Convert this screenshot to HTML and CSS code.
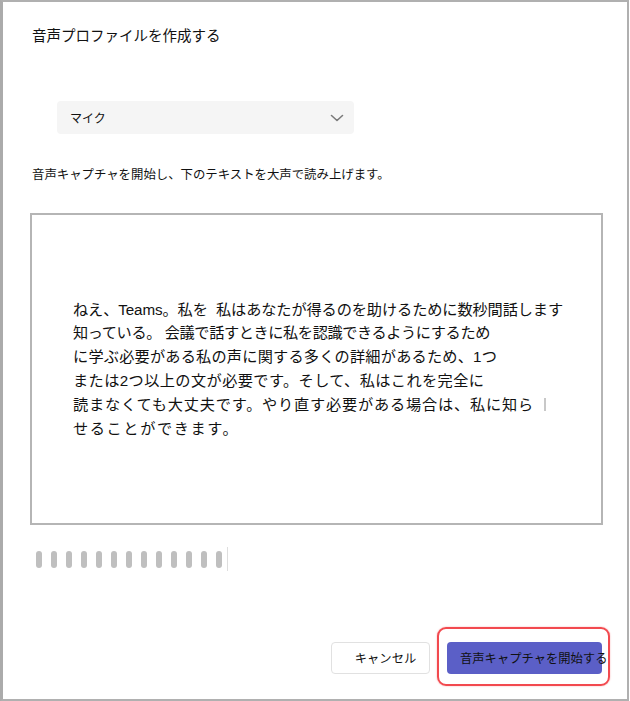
FILE: index.html
```html
<!DOCTYPE html>
<html lang="ja">
<head>
<meta charset="utf-8">
<link rel="stylesheet" href="styles.css">
</head>
<body>
<div class="frame">
  <h1 class="title">音声プロファイルを作成する</h1>
  <div class="select">
    <span class="select-label">マイク</span>
    <svg class="chevron" width="14" height="8" viewBox="0 0 14 8"><path d="M1.5 1.5 L7 6.5 L12.5 1.5" fill="none" stroke="#7a7a7a" stroke-width="1.6" stroke-linecap="round" stroke-linejoin="round"/></svg>
  </div>
  <p class="instruction">音声キャプチャを開始し、下のテキストを大声で読み上げます。</p>
  <div class="readbox">
    <p class="readtext">
      <span class="line l1">ねえ、Teams。私を&nbsp; 私はあなたが得るのを助けるために数秒間話します</span>
      <span class="line l2">知っている。 会議で話すときに私を認識できるようにするため</span>
      <span class="line l3">に学ぶ必要がある私の声に関する多くの詳細があるため、1つ</span>
      <span class="line l4">または2つ以上の文が必要です。そして、私はこれを完全に</span>
      <span class="line l5">読まなくても大丈夫です。やり直す必要がある場合は、私に知ら<span class="caret"></span></span>
      <span class="line l6">せることができます。</span>
    </p>
  </div>
  <div class="meter">
    <span class="bar"></span><span class="bar"></span><span class="bar"></span><span class="bar"></span><span class="bar"></span><span class="bar"></span><span class="bar"></span><span class="bar"></span><span class="bar"></span><span class="bar"></span><span class="bar"></span><span class="bar"></span><span class="bar"></span>
    <span class="meter-line"></span>
  </div>
  <div class="footer">
    <button class="btn btn-cancel">キャンセル</button>
    <div class="highlight">
      <button class="btn btn-primary">音声キャプチャを開始する</button>
    </div>
  </div>
</div>
</body>
</html>
```

FILE: styles.css
```css
html, body {
  margin: 0;
  padding: 0;
  background: #ffffff;
}
body {
  font-family: "Liberation Sans", "Noto Sans CJK JP", sans-serif;
  color: #111111;
}
.frame {
  box-sizing: border-box;
  width: 629px;
  height: 701px;
  border-left: 3px solid #ababab;
  border-top: 2px solid #b0b0b0;
  border-right: 2px solid #b0b0b0;
  border-bottom: 2px solid #b0b0b0;
  padding: 24px 0 0 27px;
  display: flex;
  flex-direction: column;
  align-items: flex-start;
}
.title {
  margin: 0 0 0 2px;
  font-size: 14.5px;
  line-height: 21px;
  font-weight: 400;
  color: #111;
}
.select {
  box-sizing: border-box;
  margin: 54px 0 0 27px;
  width: 297px;
  height: 33px;
  background: #f5f5f5;
  border-radius: 4px;
  display: flex;
  align-items: center;
  justify-content: space-between;
  padding: 0 10px 0 13px;
}
.select-label {
  font-size: 12px;
  color: #111;
}
.chevron {
  display: block;
}
.instruction {
  margin: 32px 0 0 2px;
  font-size: 12.4px;
  line-height: 18px;
  color: #111;
}
.readbox {
  box-sizing: border-box;
  margin-top: 29px;
  width: 573px;
  height: 312px;
  border: 2px solid #b5b5b5;
  display: flex;
  align-items: center;
  padding-left: 41px;
}
.readtext {
  margin: 0;
  font-size: 15.2px;
  line-height: 23.8px;
  color: #111;
  white-space: nowrap;
}
.line {
  display: block;
}
.l1 { letter-spacing: -0.1px; }
.l2 { letter-spacing: -0.4px; }
.l3 { letter-spacing: 0.2px; }
.l4 { letter-spacing: 0.4px; }
.l5 { letter-spacing: 0.8px; }
.l6 { letter-spacing: 1.6px; }
.caret {
  display: inline-block;
  width: 2px;
  height: 13px;
  background: #c8c8c8;
  margin-left: 10px;
  vertical-align: -1px;
}
.meter {
  margin: 22px 0 0 6px;
  height: 24px;
  display: flex;
  align-items: center;
  gap: 9px;
}
.bar {
  display: block;
  width: 6px;
  height: 17px;
  border-radius: 3px;
  background: #bfbfbf;
}
.meter-line {
  display: block;
  width: 1px;
  height: 24px;
  background: #dedede;
  margin-left: -4px;
}
.footer {
  margin-top: 56px;
  align-self: stretch;
  display: flex;
  justify-content: flex-end;
  align-items: flex-start;
  padding-right: 17px;
  gap: 7px;
}
.btn {
  box-sizing: border-box;
  height: 32px;
  font-family: "Liberation Sans", "Noto Sans CJK JP", sans-serif;
  font-size: 12.3px;
  color: #111;
  border-radius: 4px;
  cursor: pointer;
  white-space: nowrap;
}
.btn-cancel {
  margin-top: 15px;
  width: 99px;
  background: #ffffff;
  border: 1px solid #e1e1e1;
  padding: 0 0 0 10px;
}
.highlight {
  border: 2px solid #f24a4f;
  border-radius: 9px;
  padding: 13px 6px 10px 8px;
  box-shadow: 0 0 1.5px rgba(242, 74, 79, 0.6);
}
.btn-primary {
  display: block;
  width: 155px;
  background: #5b5fc7;
  border: none;
  padding: 0 0 0 13px;
  text-align: left;
  overflow: visible;
}
```
